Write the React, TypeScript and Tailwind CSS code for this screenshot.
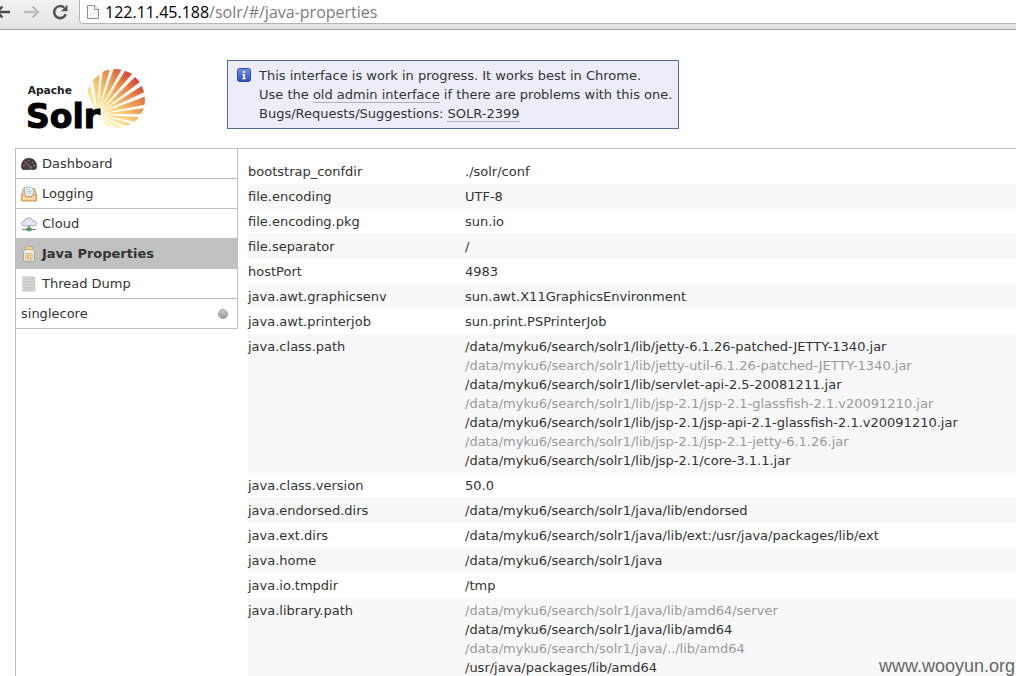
import React from 'react';

interface MenuItem {
  label: string;
  href: string;
  icon?: React.ReactNode;
  active?: boolean;
}

interface Property {
  name: string;
  values: string[];
  // first greyed-out line in multi-value rows, every second one follows
  mutedFrom?: number;
}

const DashboardIcon = () => (
  <svg width="16" height="16" viewBox="0 0 16 16" aria-hidden="true">
    <path d="M0.5 10.5C0.3 5.5 3.6 2.3 8 2.3s7.7 3.2 7.5 8.2c0 1.8-.8 3-1.8 3H2.3c-1 0-1.8-1.2-1.8-3z" fill="#3f3f44" stroke="#2a2a2e" strokeWidth=".6" />
    <path d="M2.3 9.5l1.3.1M3.6 6l1 .8M7.9 4v1.2M12.3 6l-1 .8M13.7 9.5l-1.3.1" stroke="#b9b9bd" strokeWidth=".9" />
    <path d="M4 5.6l6.2 6.6" stroke="#d2455a" strokeWidth="1.2" />
    <circle cx="9.6" cy="11.4" r="1.3" fill="#77777c" />
  </svg>
);

const LoggingIcon = () => (
  <svg width="16" height="16" viewBox="0 0 16 16" aria-hidden="true">
    <path d="M.8 8L2.4 2.5h11.2L15.2 8v6.8H.8z" fill="#f6cf9c" stroke="#cf8c45" strokeWidth=".8" />
    <path d="M3.6 1.2h5.800l3 2v7H3.600z" fill="#f2f9ff" stroke="#7fa9c4" strokeWidth=".8" />
    <path d="M5.3 3.6h3.5M5.3 5.4h5.5M5.3 7.2h5.5" stroke="#8fbfd0" strokeWidth=".8" />
    <path d="M.7 8.6h3.6l1 2.2h5.4l1-2.2h3.6v6.2H.7z" fill="#f9d6a6" stroke="#d08c44" strokeWidth=".9" />
  </svg>
);

const CloudIcon = () => (
  <svg width="16" height="16" viewBox="0 0 16 16" aria-hidden="true">
    <path d="M3.6 9.8C1.8 9.8.6 8.9.6 7.5S1.8 5.3 3.3 5.3C3.7 3.2 5.5 2 7.7 2c2.1 0 3.7 1.1 4.2 2.9 2.1 0 3.5 1 3.5 2.6 0 1.5-1.3 2.3-3 2.3z" fill="#e4e6f3" stroke="#9196ae" strokeWidth=".9" />
    <path d="M8 10v3" stroke="#4d9a4f" strokeWidth="1.4" />
    <path d="M1 13.5h5M10 13.5h5" stroke="#777d7c" strokeWidth="1.2" />
    <rect x="5.7" y="12" width="4.6" height="2.8" rx="1" fill="#50ad55" stroke="#2c7c38" strokeWidth=".7" />
  </svg>
);

const JarIcon = () => (
  <svg width="16" height="16" viewBox="0 0 16 16" aria-hidden="true">
    <path d="M4.5 3.4h7l1.8 2.3v9.6H2.7V5.7z" fill="#f3f5f4" stroke="#8c9898" strokeWidth=".8" />
    <rect x="4.2" y=".7" width="7.6" height="2.6" rx=".8" fill="#f4dc9a" stroke="#c39a4c" strokeWidth=".7" />
    <path d="M4.8 7.2h6.4v6.6H4.8z" fill="#f9e7bd" stroke="#e0b25c" strokeWidth=".8" />
    <path d="M6 8.9h1.5M9 8.5v2.2M6 11.2h1.5v1.3M9.2 12.2h1" stroke="#d08f3c" strokeWidth="1" fill="none" />
  </svg>
);

const ThreadIcon = () => (
  <svg width="16" height="16" viewBox="0 0 16 16" aria-hidden="true">
    {[1, 4, 7, 10, 13].map((y) => (
      <g key={y} fill="none" stroke="#a3a3a3" strokeWidth=".8">
        <rect x="1.5" y={y} width="12" height="1.8" rx=".9" fill="#f7f7f7" />
        <path d={`M13.2 ${y + 1.8}q1.8 .6 .3 1.2`} />
      </g>
    ))}
  </svg>
);

const InfoIcon = () => (
  <svg width="16" height="16" viewBox="0 0 16 16" className="mt-px shrink-0" aria-hidden="true">
    <defs>
      <linearGradient id="info" x1="0" y1="0" x2="0" y2="1">
        <stop offset="0" stopColor="#6f93e6" />
        <stop offset="1" stopColor="#2a4fc4" />
      </linearGradient>
    </defs>
    <rect x="1.5" y="1.5" width="13" height="13" rx="2" fill="url(#info)" stroke="#2f4fae" />
    <path d="M7 4h2v2H7zM6.2 7H9v4.2h1v1H6v-1h1.2V8h-1z" fill="#fff" />
  </svg>
);

const rays = [
  'M262 178L232 112A88 88 0 0 1 239 91z',
  'M262 178L249 75A88 88 0 0 1 268 59z',
  'M262 178L278 50A88 88 0 0 1 299 44z',
  'M262 178L311 42A88 88 0 0 1 334 44z',
  'M262 178L345 47A88 88 0 0 1 366 57z',
  'M262 178L375 66A88 88 0 0 1 389 82z',
  'M262 178L395 93A88 88 0 0 1 402 112z',
  'M262 178L404 125A88 88 0 0 1 404 149z',
  'M262 178L401 160A88 88 0 0 1 393 177z',
  'M262 178L387 187A88 88 0 0 1 373 200z',
  'M262 178L364 206A88 88 0 0 1 347 213z',
  'M262 178L335 217A88 88 0 0 1 317 218z',
  'M262 178L304 217A88 88 0 0 1 288 213z',
];

const SolrLogo = () => (
  <svg width="120" height="70" viewBox="48 36 360 210" role="img" aria-label="Apache Solr">
    <defs>
      <linearGradient id="sun" gradientUnits="userSpaceOnUse" x1="265" y1="190" x2="385" y2="65">
        <stop offset="0" stopColor="#fff6bf" />
        <stop offset=".35" stopColor="#f9cf74" />
        <stop offset=".7" stopColor="#ea8547" />
        <stop offset="1" stopColor="#cf3730" />
      </linearGradient>
    </defs>
    {rays.map((d) => <path key={d} d={d} fill="url(#sun)" />)}
    <text x="53" y="117" fontFamily="'DejaVu Sans', sans-serif" fontWeight="700" fontSize="32" fill="#222">Apache</text>
    <text x="48" y="218" fontFamily="'DejaVu Sans', sans-serif" fontWeight="700" fontSize="99" fill="#000" stroke="#000" strokeWidth="3">Solr</text>
  </svg>
);

const menu: MenuItem[] = [
  { label: 'Dashboard', href: '#/', icon: <DashboardIcon /> },
  { label: 'Logging', href: '#/logging', icon: <LoggingIcon /> },
  { label: 'Cloud', href: '#/cloud', icon: <CloudIcon /> },
  { label: 'Java Properties', href: '#/java-properties', icon: <JarIcon />, active: true },
  { label: 'Thread Dump', href: '#/threads', icon: <ThreadIcon /> },
  { label: 'singlecore', href: '#/singlecore' },
];

const properties: Property[] = [
  { name: 'bootstrap_confdir', values: ['./solr/conf'] },
  { name: 'file.encoding', values: ['UTF-8'] },
  { name: 'file.encoding.pkg', values: ['sun.io'] },
  { name: 'file.separator', values: ['/'] },
  { name: 'hostPort', values: ['4983'] },
  { name: 'java.awt.graphicsenv', values: ['sun.awt.X11GraphicsEnvironment'] },
  { name: 'java.awt.printerjob', values: ['sun.print.PSPrinterJob'] },
  {
    name: 'java.class.path',
    mutedFrom: 1,
    values: [
      '/data/myku6/search/solr1/lib/jetty-6.1.26-patched-JETTY-1340.jar',
      '/data/myku6/search/solr1/lib/jetty-util-6.1.26-patched-JETTY-1340.jar',
      '/data/myku6/search/solr1/lib/servlet-api-2.5-20081211.jar',
      '/data/myku6/search/solr1/lib/jsp-2.1/jsp-2.1-glassfish-2.1.v20091210.jar',
      '/data/myku6/search/solr1/lib/jsp-2.1/jsp-api-2.1-glassfish-2.1.v20091210.jar',
      '/data/myku6/search/solr1/lib/jsp-2.1/jsp-2.1-jetty-6.1.26.jar',
      '/data/myku6/search/solr1/lib/jsp-2.1/core-3.1.1.jar',
    ],
  },
  { name: 'java.class.version', values: ['50.0'] },
  { name: 'java.endorsed.dirs', values: ['/data/myku6/search/solr1/java/lib/endorsed'] },
  { name: 'java.ext.dirs', values: ['/data/myku6/search/solr1/java/lib/ext:/usr/java/packages/lib/ext'] },
  { name: 'java.home', values: ['/data/myku6/search/solr1/java'] },
  { name: 'java.io.tmpdir', values: ['/tmp'] },
  {
    name: 'java.library.path',
    mutedFrom: 0,
    values: [
      '/data/myku6/search/solr1/java/lib/amd64/server',
      '/data/myku6/search/solr1/java/lib/amd64',
      '/data/myku6/search/solr1/java/../lib/amd64',
      '/usr/java/packages/lib/amd64',
    ],
  },
];

const BrowserBar = () => (
  <div className="flex h-[30px] shrink-0 items-start border-b border-[#a3a3a3] bg-gradient-to-b from-[#f3f3f3] to-[#e4e4e4]">
    <div className="flex h-6 w-[79px] shrink-0 items-center">
      <button type="button" aria-label="Back" className="w-6">
        <svg width="10" height="16" viewBox="0 0 10 16" fill="none" stroke="#4b4b4b" strokeWidth="2.4">
          <path d="M10 8H-3M2.5 2.5L-3 8l5.5 5.5" />
        </svg>
      </button>
      <button type="button" aria-label="Forward" className="w-7">
        <svg width="16" height="16" viewBox="0 0 16 16" fill="none" stroke="#bdbdbd" strokeWidth="2.4">
          <path d="M0 8h13.5M8.5 2.5L14 8l-5.5 5.5" />
        </svg>
      </button>
      <button type="button" aria-label="Reload">
        <svg width="17" height="16" viewBox="0 0 17 16">
          <path d="M13.8 10.3A6 6 0 1 1 12.3 3.7" fill="none" stroke="#505050" strokeWidth="2.5" />
          <path d="M15.5 .8v6.4H9.1z" fill="#505050" />
        </svg>
      </button>
    </div>
    <div className="flex h-6 grow items-center rounded-bl-sm border-b border-l border-[#b5b5b5] bg-white pl-[7px] font-['Open_Sans',sans-serif] text-base">
      <svg width="12" height="16" viewBox="0 0 12 16" className="mr-[6px] shrink-0" fill="#fafafa" stroke="#8c8c8c" aria-hidden="true">
        <path d="M.5 1.5h7l4 4v9H.5z" />
        <path d="M7.5 1.5v4h4" />
      </svg>
      <label htmlFor="address" className="text-black">122.11.45.188</label>
      <input id="address" type="text" defaultValue="/solr/#/java-properties" className="h-6 min-w-0 grow bg-transparent text-[#7c7c7c] outline-none" />
    </div>
  </div>
);

export default function App() {
  return (
    <div className="relative flex h-screen flex-col overflow-hidden bg-white font-['DejaVu_Sans',Verdana,sans-serif] text-[13px] leading-[19px] text-[#333]">
      <BrowserBar />

      <header className="flex items-start pt-[30px] pb-[19px]">
        <a href="#/" className="mt-[7px] mr-[81px] -mb-2 ml-[26px] shrink-0"><SolrLogo /></a>
        <div className="flex gap-[7px] border border-[#4d6aa3] bg-[#ecedf9] py-[5px] pr-[6px] pl-2">
          <InfoIcon />
          <p>
            This interface is work in progress. It works best in Chrome.<br />
            Use the <a href="#/old" className="border-b border-[#b0b0b8]">old admin interface</a> if there are problems with this one.<br />
            Bugs/Requests/Suggestions: <a href="#/SOLR-2399" className="border-b border-[#b0b0b8]">SOLR-2399</a>
          </p>
        </div>
      </header>

      <div className="ml-[15px] flex min-h-0 grow border-t border-l border-[#c0c0c0]">
        <nav className="w-[222px] shrink-0">
          <ul className="border-r border-[#c0c0c0]">
            {menu.map((item) => (
              <li key={item.label} className="border-b border-[#c0c0c0]">
                <a
                  href={item.href}
                  className={`flex h-[29px] items-center gap-[5px] pr-[9px] pl-[5px] ${item.active ? 'bg-[#c0c0c0] font-bold' : ''}`}
                >
                  {item.icon}
                  {item.label}
                  {!item.icon && <span className="ml-auto size-[10px] rounded-full border border-[#999] bg-gradient-to-b from-[#ccc] to-[#999]" />}
                </a>
              </li>
            ))}
          </ul>
        </nav>

        <main className="grow pt-[10px] pl-[10px]">
          <table className="w-full">
            <tbody>
              {properties.map((prop) => (
                <tr key={prop.name} className="align-top even:bg-[#f8f8f8]">
                  <th scope="row" className="w-[217px] py-[3px] text-left font-normal">{prop.name}</th>
                  <td className="py-[3px] whitespace-nowrap">
                    {prop.values.map((value, i) => (
                      <div key={value} className={prop.mutedFrom !== undefined && i % 2 === prop.mutedFrom ? 'text-[#999]' : ''}>
                        {value}
                      </div>
                    ))}
                  </td>
                </tr>
              ))}
            </tbody>
          </table>
        </main>
      </div>

      <div className="absolute right-px bottom-0 font-['Liberation_Sans',sans-serif] text-lg leading-5 text-[#666]">www.wooyun.org</div>
    </div>
  );
}
